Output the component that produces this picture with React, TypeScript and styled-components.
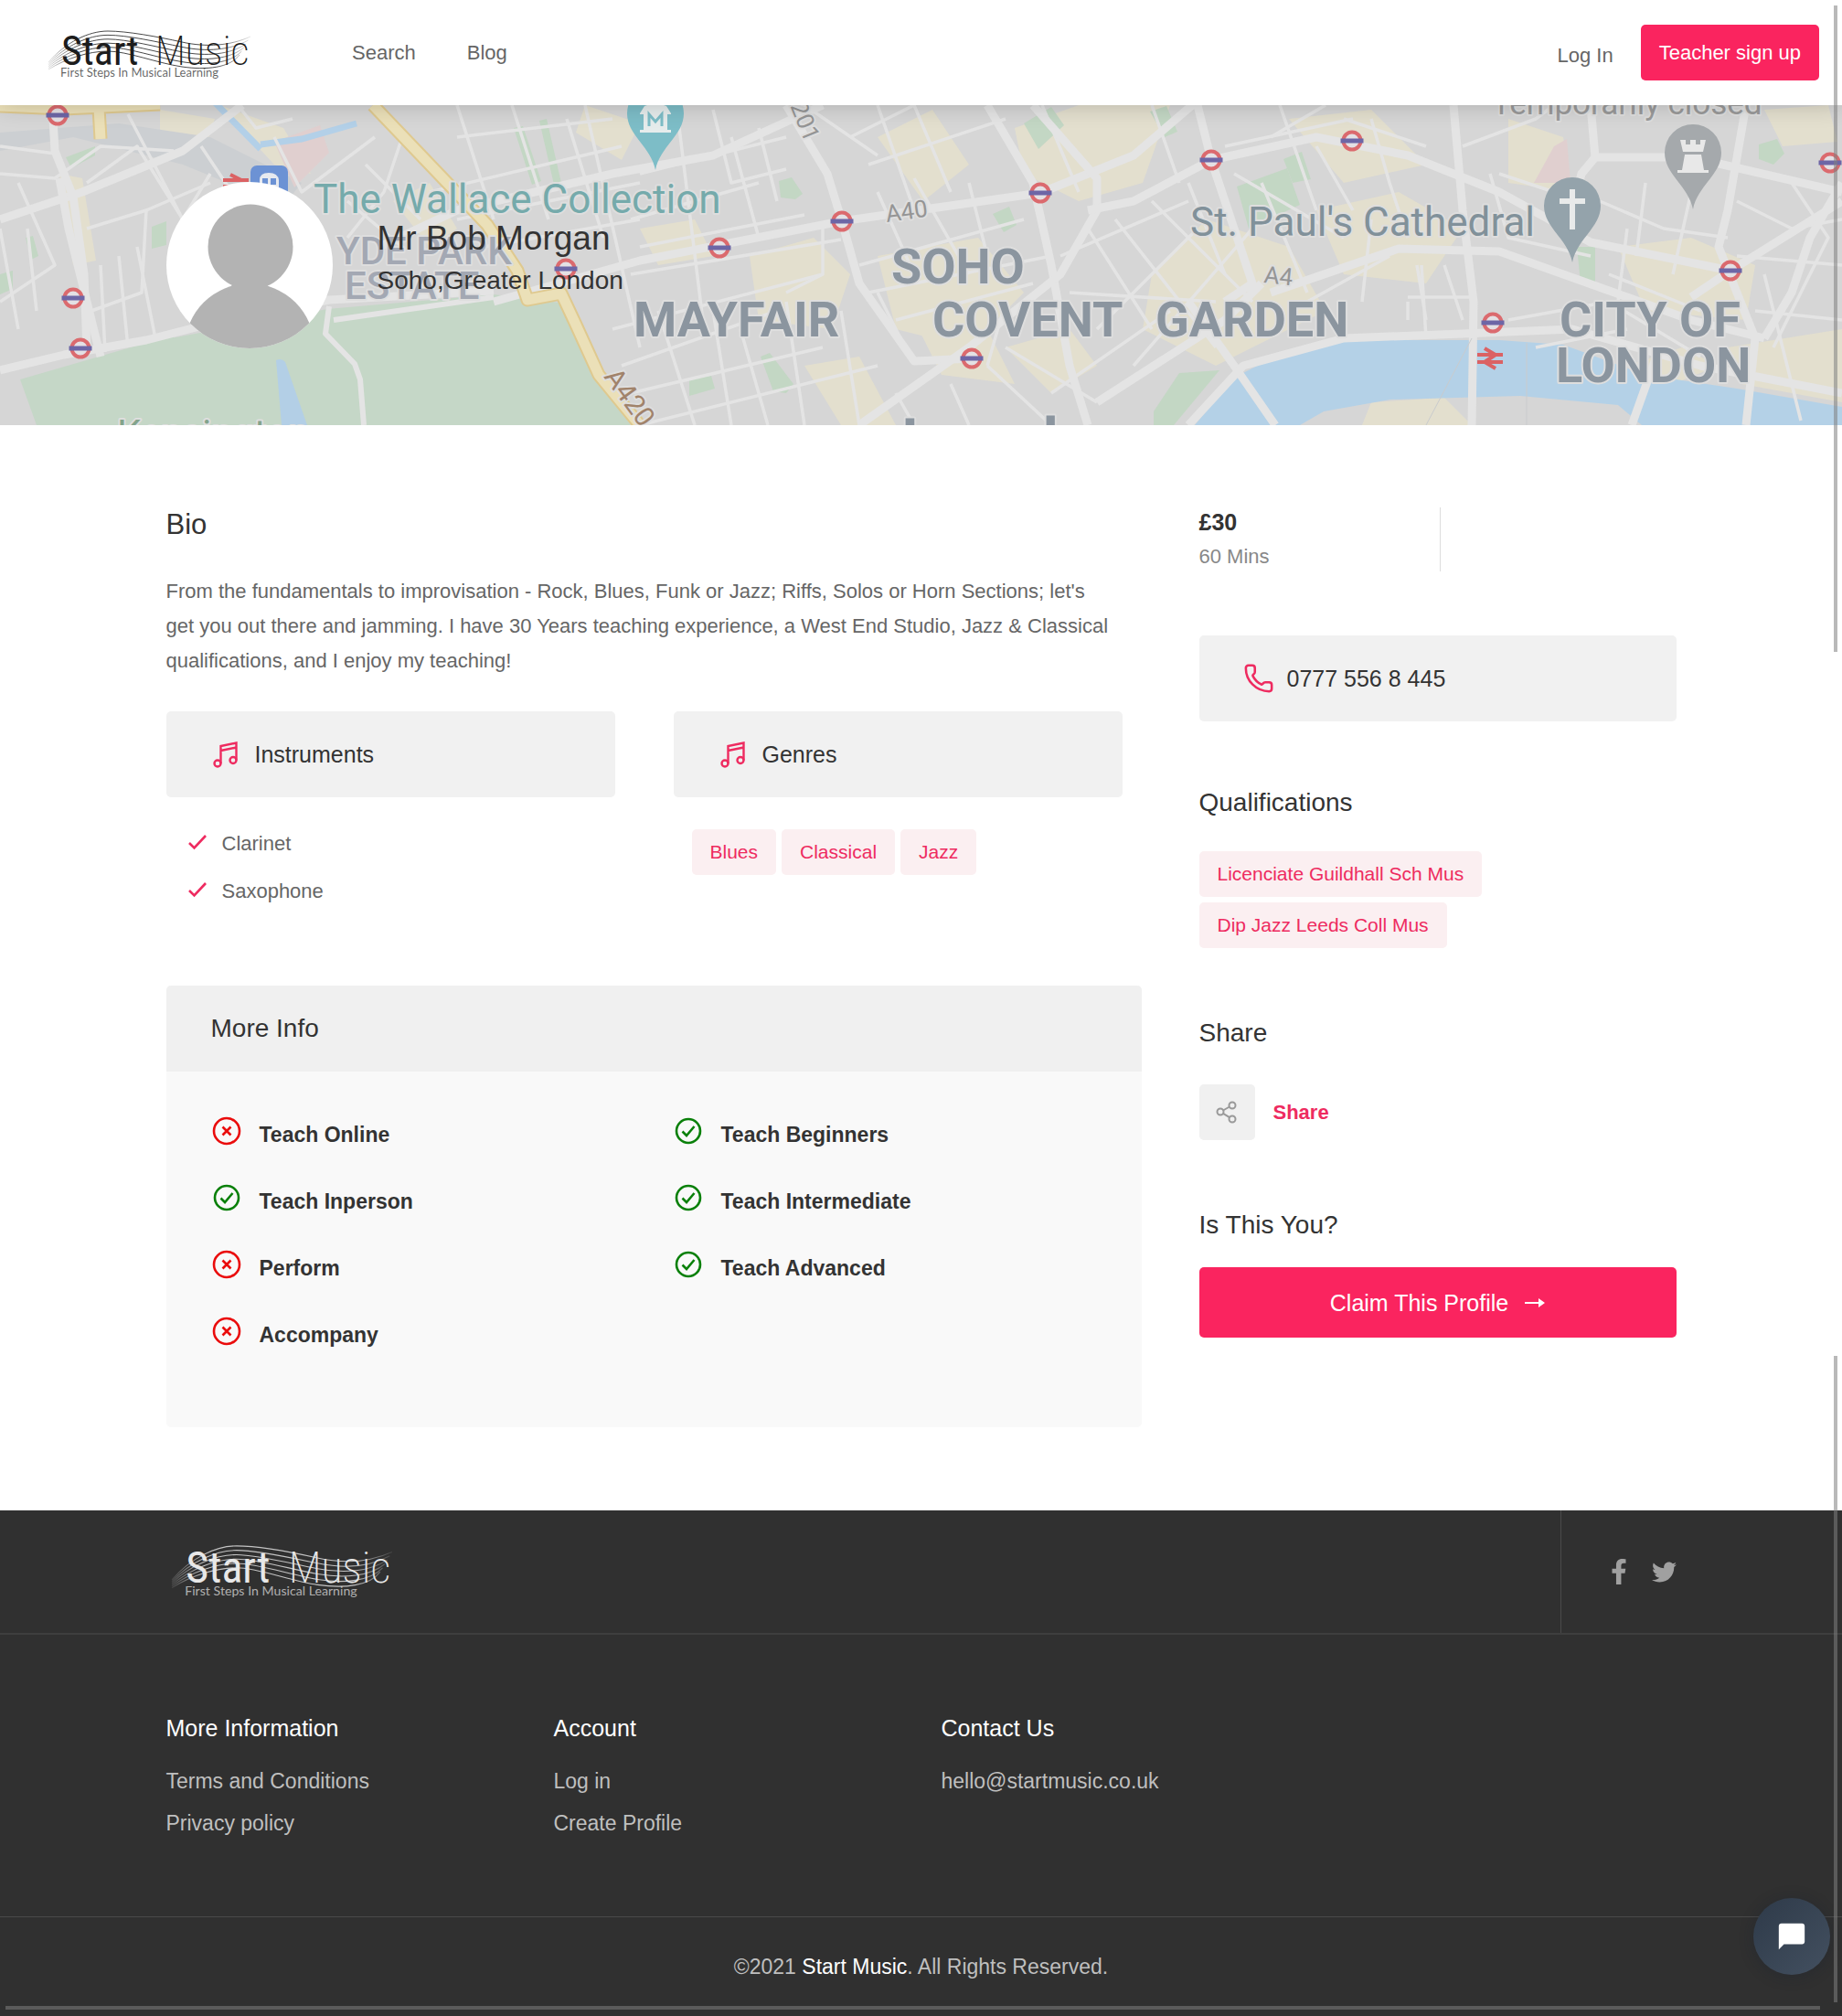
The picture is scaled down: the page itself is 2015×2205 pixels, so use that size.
import React from 'react';
import styled, { createGlobalStyle } from 'styled-components';
import { FaFacebookF, FaTwitter } from 'react-icons/fa';
import { MdChatBubble } from 'react-icons/md';
import { Phone } from 'lucide-react';

const pink = '#fa245f';
const ink = '#333';
const body = '#666';

const GlobalStyle = createGlobalStyle`
  *, *::before, *::after { box-sizing: border-box; }
  body {
    margin: 0;
    background: #fff;
    color: ${body};
    font-family: "Liberation Sans", Arial, sans-serif;
    font-size: 22px;
    line-height: 38px;
  }
  a { color: inherit; text-decoration: none; }
  h1, h2, h3, p, ul { margin: 0; padding: 0; font-weight: 400; }
  ul { list-style: none; }
  svg { display: block; flex: none; }
`;

const Page = styled.div`
  position: relative;
`;

const Container = styled.div`
  width: 82%;
  max-width: 1652px;
  margin: 0 auto;
`;

/* ---------- header ---------- */

const Header = styled.header`
  position: relative;
  z-index: 2;
  display: flex;
  align-items: center;
  height: 115px;
  padding: 0 25px 0 52px;
  background: #fff;
  box-shadow: 0 0 24px rgba(0, 0, 0, 0.2);
`;

const Nav = styled.nav`
  display: flex;
  gap: 56px;
  margin-left: 111px;
`;

const Account = styled.div`
  display: flex;
  align-items: center;
  gap: 30px;
  margin-left: auto;
`;

const LoginLink = styled.a`
  padding-top: 6px;
`;

const SignUp = styled.button`
  height: 61px;
  padding: 0 20px;
  border: 0;
  border-radius: 5px;
  background: ${pink};
  color: #fff;
  font: inherit;
`;

/* ---------- hero ---------- */

const Hero = styled.section`
  position: relative;
  display: flex;
  align-items: center;
  height: 350px;
  overflow: hidden;
  background: #d6d6d6;
`;

const MapArt = styled.svg`
  position: absolute;
  inset: 0;
  width: 100%;
  height: 100%;
`;

const Profile = styled.div`
  position: relative;
  display: flex;
  align-items: center;
  gap: 49px;
  color: ${ink};
`;

const Avatar = styled.svg`
  width: 182px;
  height: 182px;
  border-radius: 50%;
  background: #fff;
`;

const Identity = styled.div`
  padding-bottom: 12px;
  line-height: 46px;
`;

const Name = styled.h1`
  font-size: 37px;
`;

const Place = styled.p`
  font-size: 28px;
`;

/* ---------- main ---------- */

const Columns = styled(Container)`
  display: grid;
  grid-template-columns: minmax(0, 1067fr) minmax(0, 522fr);
  gap: 63px;
  padding: 90px 0 91px;
`;

const BioTitle = styled.h2`
  margin-bottom: 35px;
  color: ${ink};
  font-size: 31px;
`;

const BioText = styled.p`
  max-width: 1036px;
`;

const Pair = styled.div`
  display: grid;
  grid-template-columns: 1fr 1fr;
  gap: 64px;
  margin: 36px 0 77px;
  padding-right: 21px;
`;

const Bar = styled.h3`
  display: flex;
  align-items: center;
  gap: 16px;
  height: 94px;
  padding: 0 49px;
  border-radius: 5px;
  background: #f1f1f1;
  color: ${ink};
  font-size: 25px;
`;

const Instruments = styled.ul`
  padding: 25px 24px 0;
`;

const Instrument = styled.li`
  display: flex;
  align-items: center;
  gap: 17px;
  line-height: 52px;
`;

const Tags = styled.ul<{ $inset?: boolean }>`
  display: flex;
  flex-wrap: wrap;
  gap: 6px;
  padding: ${(p) => (p.$inset ? '35px 20px 0' : '0')};
`;

const Tag = styled.li`
  padding: 0 20px;
  border-radius: 5px;
  background: #fbeff1;
  color: #ee2b60;
  font-size: 21px;
  line-height: 50px;
`;

const Panel = styled.section`
  border-radius: 5px;
  overflow: hidden;
  background: #f9f9f9;
`;

const PanelTitle = styled.h2`
  padding: 0 49px;
  background: #f0f0f0;
  color: ${ink};
  font-size: 28px;
  line-height: 94px;
`;

const Facts = styled.ul`
  display: grid;
  grid-template-columns: 1fr 1fr;
  grid-template-rows: repeat(4, 33px);
  grid-auto-flow: column;
  row-gap: 40px;
  padding: 52px 8px 85px 49px;
`;

const Fact = styled.li`
  display: flex;
  align-items: center;
  gap: 19px;
  color: ${ink};
  font-size: 23px;
  font-weight: 700;

  svg { margin-bottom: 8px; }
`;

const Price = styled.div`
  display: flex;
  flex-direction: column;
  gap: 4px;
  width: 264px;
  border-right: 1px solid #ddd;
  color: #888;
  line-height: 33px;

  strong { color: ${ink}; font-size: 25px; }
`;

const PhoneLink = styled.a`
  display: flex;
  align-items: center;
  gap: 14px;
  height: 94px;
  margin: 70px 0 71px;
  padding: 0 48px;
  border-radius: 5px;
  background: #f1f1f1;
  color: ${ink};
  font-size: 25px;
`;

const SideTitle = styled.h2`
  color: ${ink};
  font-size: 28px;
  line-height: 36px;
`;

const SideBlock = styled.section<{ $gap: number }>`
  display: flex;
  flex-direction: column;
  gap: ${(p) => p.$gap}px;

  & + & { margin-top: 75px; }
`;

const ShareButton = styled.button`
  display: flex;
  align-items: center;
  align-self: flex-start;
  gap: 20px;
  padding: 0;
  border: 0;
  background: none;
  color: #ee2b60;
  font: inherit;
  font-weight: 700;
`;

const ShareIcon = styled.span`
  display: grid;
  place-items: center;
  width: 61px;
  height: 61px;
  border-radius: 5px;
  background: #f0f0f0;
`;

const Claim = styled.button`
  display: flex;
  align-items: center;
  justify-content: center;
  gap: 18px;
  height: 77px;
  border: 0;
  border-radius: 5px;
  background: ${pink};
  color: #fff;
  font: inherit;
  font-size: 25px;
`;

/* ---------- footer ---------- */

const Footer = styled.footer`
  background: #303030;
  color: #bfbfbf;
  font-size: 23px;
`;

const FooterTop = styled.div`
  border-bottom: 2px solid #3e3e3e;
`;

const FooterTopRow = styled(Container)`
  display: flex;
  justify-content: space-between;
  height: 134px;
`;

const FooterLogo = styled.a`
  padding: 30px 0 0 5px;
`;

const Social = styled.div`
  display: flex;
  align-items: center;
  gap: 22px;
  padding-left: 49px;
  border-left: 1px solid #4a4a4a;
  color: #a0a0a0;
`;

const Links = styled(Container)`
  display: grid;
  grid-template-columns: repeat(2, 424px) 1fr;
  padding: 85px 0 79px;
  line-height: 46px;

  h3 {
    margin-bottom: 18px;
    color: #fff;
    font-size: 25px;
    line-height: 34px;
  }
`;

const Copyright = styled.p`
  border-top: 1px solid #4a4a4a;
  line-height: 108px;
  text-align: center;

  strong { color: #fff; font-weight: 400; }
`;

/* ---------- overlays ---------- */

const Chat = styled.button`
  position: absolute;
  right: 13px;
  bottom: 45px;
  display: grid;
  place-items: center;
  width: 84px;
  height: 84px;
  padding: 0;
  border: 0;
  border-radius: 50%;
  background: linear-gradient(135deg, #2e3a49, #435060);
  color: #fff;
  box-shadow: 0 2px 16px rgba(20, 30, 45, 0.3);
`;

const Rail = styled.div<{ $at: 'top' | 'bottom' | 'floor' }>`
  position: absolute;
  z-index: 3;
  background: rgba(128, 128, 128, 0.55);
  ${(p) => p.$at === 'top' && 'top: 6px; right: 5px; width: 4px; height: 707px;'}
  ${(p) => p.$at === 'bottom' && 'bottom: 15px; right: 5px; width: 4px; height: 707px;'}
  ${(p) => p.$at === 'floor' && 'left: 6px; right: 24px; bottom: 7px; height: 4px;'}
`;

/* ---------- drawings ---------- */

const stave = [0, 0.2, 0.4, 0.6, 0.8, 1];

const Logo = ({ width, color, id }: { width: number; color: string; id: string }) => (
  <svg width={width} height={Math.round((width * 64) / 222)} viewBox="0 0 222 64" role="img" aria-label="Start Music">
    <defs>
      <linearGradient id={id} gradientUnits="userSpaceOnUse" x1="0" y1="0" x2="222" y2="0">
        <stop offset="0" stopColor={color} stopOpacity="0.1" />
        <stop offset="0.15" stopColor={color} stopOpacity="0.8" />
        <stop offset="0.82" stopColor={color} stopOpacity="0.8" />
        <stop offset="1" stopColor={color} stopOpacity="0.1" />
      </linearGradient>
    </defs>
    {stave.map((t) => (
      <path
        key={t}
        d={`M1 ${42 + 8 * t} C 20 ${20 + 18 * t}, 45 ${8 + 22 * t}, 66 ${8 + 22 * t} S 120 ${14 + 29 * t}, 147 ${20 + 27 * t} S 200 ${24 + 24 * t}, ${222 - 12 * t} ${14 + 20 * t}`}
        fill="none"
        stroke={`url(#${id})`}
        strokeWidth="1"
      />
    ))}
    <g fill={color} fontFamily="'Roboto Condensed', 'Liberation Sans', sans-serif" fontSize="44">
      <text x="15" y="45">Start</text>
      <text x="118" y="45" fontWeight="200">Music</text>
    </g>
    <text x="14" y="58" fill={color} fillOpacity="0.7" fontFamily="Lato, sans-serif" fontSize="13">
      First Steps In Musical Learning
    </text>
  </svg>
);

const MusicIcon = () => (
  <svg width="32" height="32" viewBox="0 0 32 32" fill="none" stroke="#ee2b60" strokeWidth="2.400">
    <circle cx="7" cy="26" r="3.500" />
    <circle cx="24" cy="22.500" r="3.500" />
    <path d="M10.500 26V7L27.500 3.500V22.500M10.500 12L27.500 8.500" />
  </svg>
);

const TickIcon = () => (
  <svg width="20" height="20" viewBox="0 0 20 20" fill="none" stroke="#ee2b60" strokeWidth="2.600">
    <path d="M1 9l5.500 5.500L19 1" />
  </svg>
);

const FactIcon = ({ yes }: { yes: boolean }) =>
  yes ? (
    <svg width="34" height="34" viewBox="0 0 34 34" fill="none" stroke="#0a800a" strokeWidth="2.600">
      <circle cx="17" cy="17" r="13" />
      <path d="M10.500 17.500l4.500 4.500 8.500-10" />
    </svg>
  ) : (
    <svg width="34" height="34" viewBox="0 0 34 34" fill="none" stroke="#ea0c0c" strokeWidth="2.600">
      <circle cx="17" cy="17" r="14" />
      <path d="M12.500 12.500l9 9M21.500 12.500l-9 9" />
    </svg>
  );

const NodesIcon = () => (
  <svg width="24" height="26" viewBox="0 0 24 26" fill="none" stroke="#999" strokeWidth="2">
    <circle cx="5" cy="12" r="3.500" />
    <circle cx="18" cy="5" r="3.500" />
    <circle cx="18" cy="20" r="3.500" />
    <path d="M8 10.500l7-4M8 13.800l7 4.400" />
  </svg>
);

const ArrowIcon = () => (
  <svg width="22" height="12" viewBox="0 0 22 12" fill="#fff">
    <path d="M0 5h15V1l7 5-7 5V7H0z" />
  </svg>
);

const stations = [
  [63, 126], [80, 326], [88, 381], [619, 294], [787, 271], [921, 242], [1138, 211],
  [1325, 175], [1063, 392], [1479, 154], [2002, 178], [1893, 296], [1633, 353],
];

const blocks = [
  'M1110 140L1180 115H1280L1250 200 1180 220 1120 190z',
  'M960 150l60-30 40 60-50 40z',
  'M820 280l70-20 40 40-20 60-80-10z',
  'M960 280l110-20 50 60-60 60-80-20z',
  'M1260 300l60-60 90 30 40 70-120 60-80-40z',
  'M1410 130l90-10 60 60-90 20z',
  'M1440 230l90-20 70 40-40 60-90-10z',
  'M1650 130l60 20 10 60-70-10z',
  'M1770 270l80-10 70 30-10 60-110-10z',
  'M1890 380l125-20v80l-110-20z',
  'M700 250l60-10 20 40-60 10z',
  'M880 400l60-10 40 75h-60z',
  'M1000 350l80 10 30 60-80-10z',
  'M1100 380l70-20 30 40-50 30z',
  'M175 120l60 10-10 30-50-10z',
  'M240 115l70 25 30 50-40-10z',
  'M430 220l40-20 30 50-30 20z',
  'M640 115l60 20-20 40-50-30z',
  'M65 190l25 5 15 90-25 5z',
  'M1500 440l80-5 30 30h-120z',
  'M1930 120l70-5 10 40-60 5z',
  'M1780 400l60-20 40 20-50 20z',
];

const parks = [
  'M1120 135l30-18 14 20-28 26z',
  'M1258 122l18-6 12 28-14 6z',
  'M1086 234l18-8 8 20-14 8z',
  'M852 198l14-4 12 18-8 6-16-2z',
  'M1353 204l55-20 14 40-56 26z',
  'M1404 174l20-8 10 30-20 4z',
  'M832 390l10-4 26 34-8 10-14-2z',
  'M754 415l24-4 4 14-28 8z',
  'M1262 450l28-42 44-3-50 60h-22z',
  'M1725 270h20v40h-16z',
  'M1924 158l20-6 8 16-12 12-16-6z',
  'M72 172l32-12v10l-26 14z',
  'M166 370l20-8 6 10-20 8z',
  'M28 260l8-2 6 22-8 4z',
  'M562 140l10-2 20 60-10 4z',
  'M590 132l8-2 16 70-8 2z',
  'M0 300l14-4v20l-14 6z',
  'M166 248l16-6v26l-16 4z',
];

const minorRoads = [
  'M0 190L60 195 110 160 190 165M0 160L60 168M20 200L60 290 0 330M95 200L150 160 200 240 230 190M140 125L200 240 190 290',
  'M95 250L160 230 155 320 100 340M110 290L115 385M130 280L140 380M150 270L170 370M0 250L20 360M30 250L40 340',
  'M160 230L230 200M220 160L260 220M300 150L330 210 370 180 410 150M400 180L460 240M440 150L420 210 380 260',
  'M260 115L280 140 320 130M380 220L440 270M500 115L540 240M560 115L600 240M620 130L660 260M500 150L670 130',
  'M470 210L680 160M500 240L700 200M530 270L700 240M640 115L700 380M740 115L770 360M780 120L800 200 860 185',
  'M700 190L860 150M690 240L830 200M700 270L880 235M690 300L920 262M670 360L900 300M680 400L850 340',
  'M800 150L830 260M830 140L850 220M860 330L880 465M810 360L840 465M780 340L800 465M720 340L760 465',
  'M690 430L900 380M700 465L960 400M920 340L940 465M960 320L990 380M860 320L900 300 900 250',
  'M960 210L1000 300M1000 195L1060 300M1060 200L1080 280M940 290L1120 240M950 320L1150 280M980 350L1130 310',
  'M930 150L1000 115M950 180L1100 130M1000 230L960 115M1040 210L1000 115M1160 280L1300 220M1170 320L1330 330',
  'M1190 250L1260 360M1220 240L1330 380M1260 220L1370 330M1200 360L1310 250M1240 400L1370 250M1150 430L1280 340',
  'M1080 400L1150 465M1100 380L1200 440M1040 420L1060 465M980 430L1000 465M1100 330L1080 400M1380 200L1430 320',
  'M1340 160L1480 130M1350 190L1470 260M1400 115L1440 230M1440 160L1480 230M1500 130L1520 200 1540 260',
  'M1540 330V350M1550 290L1560 350M1580 290L1600 350M1540 325H1610M1560 370L1555 290M1630 190L1650 260 1740 280',
  'M1600 160L1680 130 1700 115M1640 190L1700 210M1750 220L1820 250 1890 260M1760 300L1860 340M1780 250L1770 330',
  'M1800 200L1790 280M1850 210L1830 300M1900 220L1960 250 2015 240M1900 280L2015 290M1920 340L2015 350M1930 300L1970 460',
  'M1960 200L2000 260 1940 380M1650 350L1760 330 1860 390M1680 380L1780 360M1500 240L1490 330M1470 130L1560 160',
  'M1260 115L1290 200M1140 115L1180 210M1300 200L1340 300M1390 150L1450 115M1430 330L1520 280M880 115L960 170',
];

const mainRoads = [
  'M0 240L90 210 200 165 265 115',
  'M58 130L60 165 80 215 92 300 95 385',
  'M65 195L75 250 110 390',
  'M415 270L500 230 670 190 780 170 900 115',
  'M540 330L700 285 920 242 1138 211 1240 170 1310 110',
  'M860 115L905 190 921 242 940 310 1000 395 1063 392',
  'M1080 115L1130 200 1150 290 1170 400 1190 465',
  'M1130 115L1200 195 1200 230 1160 300 1060 380 940 465',
  'M1190 230L1240 220 1325 175 1440 150 1540 170 1640 210 1740 265 1893 296 2015 220',
  'M1310 115L1325 175 1370 310 1340 330',
  'M1590 115L1600 230 1612 330 1610 465',
  'M1740 115L1745 172 1730 190 1720 230',
  'M1745 172H1850L2015 210',
  'M1910 115L1890 230 1880 270 1920 370 1910 465',
  'M1390 320L1530 272 1640 275 1780 325 1850 350 1930 370',
  'M1850 325L1893 296M1930 370L1960 320 1980 260 2015 200',
  'M1200 440L1340 350 1380 310',
  'M1300 330L1350 400 1395 465',
  'M1300 465L1360 400 1470 370 1600 365 1720 360 1860 400 2015 430',
  'M1810 395L1785 465',
];

const yellowRoads =
  'M0 116L70 119 175 114M108 118L110 152M408 115L494 205 533 246 566 296 577 328 614 321 629 353 655 410 700 465';

const pinPath = 'M0 0C-5 -26 -31 -38 -31 -62A31 31 0 0 1 31 -62C31 -38 5 -26 0 0z';

const LondonMap = () => (
  <MapArt viewBox="0 115 2015 350" preserveAspectRatio="xMidYMid slice" aria-hidden="true">
    <rect y="115" width="2015" height="350" fill="#d6d6d6" />
    <g fill="#e3dfce">{blocks.map((d) => <path key={d} d={d} />)}</g>
    <path d="M0 145L130 135 230 150 330 200 310 225 200 180 80 150 0 165z" fill="#cccfd2" />
    <path d="M300 155l50-18 10 30-38 38z M1700 160l14-8 4 48h-40z" fill="#e0cfcf" />
    <path d="M235 112L285 163M285 158L330 152 390 135" fill="none" stroke="#b3d0e8" strokeWidth="7" />
    <g fill="#c3d7c4">{parks.map((d) => <path key={d} d={d} />)}</g>
    <path d="M22 415L160 375 240 360 358 338 540 322 620 332 645 400 690 465H40z" fill="#c5d7c7" />
    <path d="M302 394q6-3 10 2l24 69h-28z" fill="#b3cfe6" />
    <path
      d="M1307 465L1350 413 1409 383 1478 372H1640L1710 377 1800 410 1900 425 2015 445V465H1796L1770 443 1663 433 1521 437 1448 450 1422 465z"
      fill="#b4d1e7"
    />
    <g fill="none" stroke="#e4e4e4" strokeLinejoin="round">
      <g strokeWidth="3.500">{minorRoads.map((d) => <path key={d} d={d} />)}</g>
      <g strokeWidth="9">{mainRoads.map((d) => <path key={d} d={d} />)}</g>
      <path d="M0 405L70 388 160 372 230 354 360 328 540 318" strokeWidth="9" />
      <path d="M360 335L356 365 388 398 394 415 398 465M365 350L540 325" strokeWidth="6" />
      <path d="M1670 465V375M1610 370L1560 465" stroke="#c9cbcd" />
    </g>
    <g fill="none" strokeLinejoin="round">
      <path d={yellowRoads} stroke="#dfc98f" strokeWidth="15" />
      <path d={yellowRoads} stroke="#ebe0b8" strokeWidth="11" />
    </g>
    <g fontFamily="Roboto, sans-serif" stroke="#dedede" strokeWidth="4" paintOrder="stroke" strokeLinejoin="round">
      <g fill="#8b959f" fontSize="54" fontWeight="700">
        <text x="975" y="310">SOHO</text>
        <text x="693" y="368">MAYFAIR</text>
        <text x="1020" y="368">COVENT</text>
        <text x="1264" y="368">GARDEN</text>
        <text x="1706" y="368">CITY OF</text>
        <text x="1702" y="418">LONDON</text>
      </g>
      <g fill="#a3a8b3" fontSize="42" fontWeight="500">
        <text x="368" y="289">YDE PARK</text>
        <text x="377" y="327">ESTATE</text>
      </g>
      <text x="343" y="233" fill="#75aaab" fontSize="44">The Wallace Collection</text>
      <text x="1302" y="258" fill="#81919a" fontSize="44">St. Paul's Cathedral</text>
      <text x="1632" y="125" fill="#9a9a9a" fontSize="35">Temporarily closed</text>
      <text x="128" y="489" fill="#83a48c" fontSize="42">Kensington</text>
      <text x="985" y="513" fill="#8b959f" fontSize="78" fontWeight="500">London</text>
      <g fill="#959595" fontSize="26">
        <text transform="translate(970 243) rotate(-8)">A40</text>
        <text transform="translate(1382 309) rotate(6)">A4</text>
        <text transform="translate(858 100) rotate(68)">A201</text>
        <text transform="translate(660 412) rotate(54)" fill="#a1836b" fontSize="30">A420</text>
      </g>
    </g>
    {stations.map(([x, y]) => (
      <g key={`${x}-${y}`} transform={`translate(${x} ${y})`}>
        <circle r="9.500" fill="#e4e0e4" stroke="#db6a6e" strokeWidth="4" />
        <rect x="-12.500" y="-2.500" width="25" height="5" fill="#6d66a6" />
      </g>
    ))}
    <g fill="none" stroke="#db6264" strokeWidth="4">
      <path d="M1616 388h28M1616 396h28M1624 381l12 7-12 8 12 7M244 197h28M244 204h20M252 191l12 6" />
    </g>
    <rect x="274" y="181" width="41" height="44" rx="7" fill="#6c92d4" />
    <path d="M284 215v-18q0-8 10-8t11 8v18z" fill="#e6e9ef" />
    <path d="M287 195h6v7h-6zM296 195h6v7h-6z" fill="#6c92d4" />
    <g transform="translate(717 186)">
      <path d={pinPath} fill="#7dbdc7" />
      <path d="M-17 -62L-12 -70 0 -74 12 -70 17 -62V-61H13V-44H17V-41H-17V-44H-13V-61H-17z" fill="#e6ecec" />
      <path d="M-7 -48V-61L0 -53 7 -61V-48" fill="none" stroke="#7dbdc7" strokeWidth="3" />
    </g>
    <g transform="translate(1720 287)">
      <path d={pinPath} fill="#94a3ab" />
      <path d="M0 -80V-36M-14 -67H14" stroke="#e8eaea" strokeWidth="6" />
    </g>
    <g transform="translate(1852 229)">
      <path d={pinPath} fill="#a5a9ac" />
      <path d="M-14 -76h6v5h5v-5h6v5h5v-5h6l-3 13h-22zM-9 -60h18l3 17h5v3h-34v-3h5z" fill="#e8e8e8" />
    </g>
  </MapArt>
);

/* ---------- content ---------- */

const facts: [string, boolean][] = [
  ['Teach Online', false],
  ['Teach Inperson', true],
  ['Perform', false],
  ['Accompany', false],
  ['Teach Beginners', true],
  ['Teach Intermediate', true],
  ['Teach Advanced', true],
];

export default function App() {
  return (
    <Page>
      <GlobalStyle />
      <Header>
        <a href="#home"><Logo width={222} color="#1c1c1c" id="stave-dark" /></a>
        <Nav>
          <a href="#search">Search</a>
          <a href="#blog">Blog</a>
        </Nav>
        <Account>
          <LoginLink href="#login">Log In</LoginLink>
          <SignUp type="button">Teacher sign up</SignUp>
        </Account>
      </Header>

      <Hero>
        <LondonMap />
        <Container>
          <Profile>
            <Avatar viewBox="0 0 182 182" aria-hidden="true">
              <circle cx="92" cy="71" r="46.500" fill="#b3b3b3" />
              <circle cx="91" cy="182" r="71" fill="#b3b3b3" />
              <path d="M74 108h34l8 16H66z" fill="#b3b3b3" />
            </Avatar>
            <Identity>
              <Name>Mr Bob Morgan</Name>
              <Place>Soho,Greater London</Place>
            </Identity>
          </Profile>
        </Container>
      </Hero>

      <Columns as="main">
        <div>
          <BioTitle>Bio</BioTitle>
          <BioText>
            From the fundamentals to improvisation - Rock, Blues, Funk or Jazz; Riffs, Solos or Horn Sections; let's
            get you out there and jamming. I have 30 Years teaching experience, a West End Studio, Jazz &amp; Classical
            qualifications, and I enjoy my teaching!
          </BioText>
          <Pair>
            <section>
              <Bar><MusicIcon />Instruments</Bar>
              <Instruments>
                <Instrument><TickIcon />Clarinet</Instrument>
                <Instrument><TickIcon />Saxophone</Instrument>
              </Instruments>
            </section>
            <section>
              <Bar><MusicIcon />Genres</Bar>
              <Tags $inset>
                <Tag>Blues</Tag>
                <Tag>Classical</Tag>
                <Tag>Jazz</Tag>
              </Tags>
            </section>
          </Pair>
          <Panel>
            <PanelTitle>More Info</PanelTitle>
            <Facts>
              {facts.map(([label, yes]) => (
                <Fact key={label}><FactIcon yes={yes} />{label}</Fact>
              ))}
            </Facts>
          </Panel>
        </div>

        <aside>
          <Price>
            <strong>£30</strong>
            <span>60 Mins</span>
          </Price>
          <PhoneLink href="tel:07775568445">
            <Phone size={34} color="#ee2b60" strokeWidth={1.8} />
            0777 556 8 445
          </PhoneLink>
          <SideBlock $gap={35}>
            <SideTitle>Qualifications</SideTitle>
            <Tags>
              <Tag>Licenciate Guildhall Sch Mus</Tag>
              <Tag>Dip Jazz Leeds Coll Mus</Tag>
            </Tags>
          </SideBlock>
          <SideBlock $gap={38}>
            <SideTitle>Share</SideTitle>
            <ShareButton type="button">
              <ShareIcon><NodesIcon /></ShareIcon>
              Share
            </ShareButton>
          </SideBlock>
          <SideBlock $gap={28}>
            <SideTitle>Is This You?</SideTitle>
            <Claim type="button">Claim This Profile<ArrowIcon /></Claim>
          </SideBlock>
        </aside>
      </Columns>

      <Footer>
        <FooterTop>
          <FooterTopRow>
            <FooterLogo href="#home"><Logo width={242} color="#e8e8e8" id="stave-light" /></FooterLogo>
            <Social>
              <a href="#facebook" aria-label="Facebook"><FaFacebookF size={28} /></a>
              <a href="#twitter" aria-label="Twitter"><FaTwitter size={27} /></a>
            </Social>
          </FooterTopRow>
        </FooterTop>
        <Links>
          <div>
            <h3>More Information</h3>
            <ul>
              <li><a href="#terms">Terms and Conditions</a></li>
              <li><a href="#privacy">Privacy policy</a></li>
            </ul>
          </div>
          <div>
            <h3>Account</h3>
            <ul>
              <li><a href="#login">Log in</a></li>
              <li><a href="#create">Create Profile</a></li>
            </ul>
          </div>
          <div>
            <h3>Contact Us</h3>
            <ul>
              <li><a href="mailto:hello@startmusic.co.uk">hello@startmusic.co.uk</a></li>
            </ul>
          </div>
        </Links>
        <Copyright>©2021 <strong>Start Music</strong>. All Rights Reserved.</Copyright>
      </Footer>

      <Chat type="button" aria-label="Open chat"><MdChatBubble size={34} /></Chat>
      <Rail $at="top" />
      <Rail $at="bottom" />
      <Rail $at="floor" />
    </Page>
  );
}
